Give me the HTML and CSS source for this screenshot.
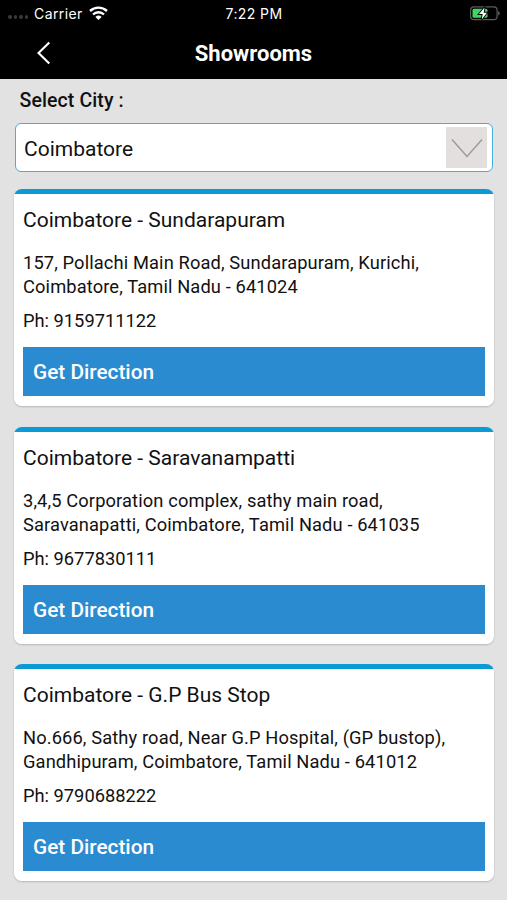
FILE: index.html
```html
<!DOCTYPE html>
<html lang="en">
<head>
    <meta charset="UTF-8">
    <meta name="viewport" content="width=device-width, initial-scale=1.0">
    <title>Showrooms</title>
    <link rel="stylesheet" href="styles.css">
</head>
<body>
    <!-- Status bar -->
    <div class="status-bar">
        <div class="carrier">
            <span class="signal"><i></i><i></i><i></i><i></i></span>
            <span>Carrier</span>
            <svg class="wifi" width="19" height="14" viewBox="0 0 19 14">
                <path d="M1 5a12.500 12.500 0 0 1 17 0M4 8.500a8 8 0 0 1 11 0" fill="none" stroke="#fff" stroke-width="2.400"/>
                <path d="M6.400 11a4.600 4.600 0 0 1 6.200 0L9.500 14z" fill="#fff"/>
            </svg>
        </div>
        <div class="time">7:22 PM</div>
        <svg class="battery" width="30" height="15" viewBox="0 0 30 15">
            <rect x="0.600" y="0.900" width="26.500" height="12.800" rx="3.500" fill="none" stroke="#5c5c5c" stroke-width="1.200"/>
            <rect x="2.500" y="2.800" width="15" height="9" rx="1.500" fill="#3bd663"/>
            <path d="M28.300 5v4.500c1.800-.8 1.800-3.700 0-4.500z" fill="#777"/>
            <path d="M14.500 1.500L9 8h3.700l-1 5.500L17 6.700h-3.300z" fill="#fff" stroke="#000" stroke-width="1.800" paint-order="stroke"/>
        </svg>
    </div>

    <div class="header">
        <svg class="back" width="14" height="24" viewBox="0 0 14 24">
            <path d="M12.300 1.500L1.500 12l10.800 10.500" fill="none" stroke="#fff" stroke-width="2.200"/>
        </svg>
        <h1>Showrooms</h1>
    </div>

    <div class="content">
        <label class="city-label">Select City :</label>
        <div class="city-select">
            <span>Coimbatore</span>
            <div class="arrow">
                <svg width="32" height="20" viewBox="0 0 32 20">
                    <path d="M1 1.500l15 17 15-17" fill="none" stroke="#999" stroke-width="1.400"/>
                </svg>
            </div>
        </div>

        <div class="card">
            <h2>Coimbatore - Sundarapuram</h2>
            <p class="address">157, Pollachi Main Road, Sundarapuram, Kurichi,<br>Coimbatore, Tamil Nadu - 641024</p>
            <p class="phone">Ph: 9159711122</p>
            <button>Get Direction</button>
        </div>

        <div class="card">
            <h2>Coimbatore - Saravanampatti</h2>
            <p class="address">3,4,5 Corporation complex, sathy main road,<br>Saravanapatti, Coimbatore, Tamil Nadu - 641035</p>
            <p class="phone">Ph: 9677830111</p>
            <button>Get Direction</button>
        </div>

        <div class="card">
            <h2>Coimbatore - G.P Bus Stop</h2>
            <p class="address">No.666, Sathy road, Near G.P Hospital, (GP bustop),<br>Gandhipuram, Coimbatore, Tamil Nadu - 641012</p>
            <p class="phone">Ph: 9790688222</p>
            <button>Get Direction</button>
        </div>
    </div>
</body>
</html>
```
FILE: styles.css
```css
* {
    box-sizing: border-box;
}
body {
    margin: 0;
    height: 900px;
    overflow: hidden;
    font-family: Roboto, sans-serif;
    color: #111;
    background-color: #e2e2e2;
}
h1, h2, p {
    margin: 0;
}
.status-bar {
    display: grid;
    grid-template-columns: 1fr auto 1fr;
    align-items: center;
    height: 26px;
    padding: 0 7px 0 8px;
    background-color: #000;
    color: #fff;
    font-family: Inter, sans-serif;
    font-size: 14px;
    letter-spacing: 0.4px;
}
.carrier {
    display: flex;
    align-items: center;
    gap: 6px;
}
.signal {
    display: flex;
    gap: 2px;
    padding-top: 8px;
}
.signal i {
    width: 3.5px;
    height: 4px;
    border-radius: 50%;
    background-color: #3a3a3a;
}
.battery {
    justify-self: end;
}
.header {
    display: grid;
    grid-template-columns: 60px 1fr 60px;
    align-items: center;
    height: 53px;
    background-color: #000;
    color: #fff;
}
.back {
    margin-left: 37px;
}
.header h1 {
    padding-top: 2px;
    text-align: center;
    font-size: 22px;
    font-weight: 700;
}
.content {
    padding: 9px 13px 0 14px;
}
.city-label {
    display: block;
    margin-left: 5.5px;
    line-height: 25px;
    font-size: 19.5px;
    font-weight: 500;
    letter-spacing: 0.1px;
}
.city-select {
    display: flex;
    justify-content: space-between;
    align-items: center;
    height: 49px;
    margin: 10px 1px 17px;
    padding: 0 5px 0 8px;
    border: 1.5px solid #45aedb;
    border-radius: 6px;
    background-color: #fff;
    font-size: 21px;
}
.city-select span {
    padding-top: 2px;
}
.arrow {
    display: flex;
    justify-content: center;
    align-items: center;
    width: 41px;
    height: 41px;
    background-color: #e3dfde;
}
.card {
    height: 217px;
    margin-bottom: 20.5px;
    padding: 17px 9px 0 9px;
    border-radius: 8px;
    background: linear-gradient(#0a9ad6 5px, #fff 5px);
    box-shadow: 0 1px 2px rgba(0, 0, 0, 0.2);
}
.card h2 {
    line-height: 28px;
    font-size: 21px;
    font-weight: 400;
}
.address {
    margin-top: 17px;
    line-height: 24px;
    font-size: 18.3px;
    letter-spacing: 0.12px;
    white-space: nowrap;
}
.phone {
    margin-top: 10px;
    line-height: 24px;
    font-size: 18.3px;
}
.card button {
    display: block;
    width: 100%;
    height: 49px;
    margin-top: 14px;
    padding: 1px 10px 0;
    border: none;
    background-color: #2b8bd0;
    color: #fff;
    font-family: inherit;
    font-size: 20.8px;
    font-weight: 500;
    text-align: left;
}
```
